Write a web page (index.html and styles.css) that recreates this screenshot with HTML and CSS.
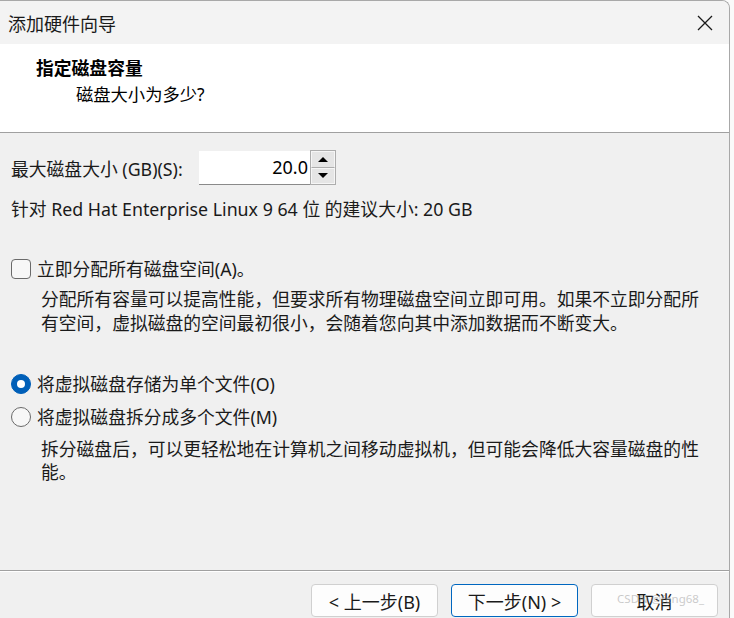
FILE: index.html
```html
<!DOCTYPE html>
<html lang="zh-CN">
<head>
    <meta charset="UTF-8">
    <title>添加硬件向导</title>
    <link rel="stylesheet" href="styles.css">
</head>
<body>
    <div class="window">
        <div class="titlebar">
            <span class="title">添加硬件向导</span>
            <button class="close" aria-label="关闭">
                <svg width="16" height="16" viewBox="0 0 16 16"><path d="M1 1 L15 15 M15 1 L1 15" stroke="#1a1a1a" stroke-width="1.3" fill="none"/></svg>
            </button>
        </div>

        <div class="header">
            <h1>指定磁盘容量</h1>
            <p>磁盘大小为多少?</p>
        </div>

        <div class="content">
            <div class="size-row">
                <label for="size">最大磁盘大小 (GB)(S):</label>
                <div class="spinner">
                    <input type="text" id="size" value="20.0">
                    <div class="spin-btns">
                        <span class="spin up"></span>
                        <span class="spin down"></span>
                    </div>
                </div>
            </div>
            <p class="hint">针对 Red Hat Enterprise Linux 9 64 位 的建议大小: 20 GB</p>

            <label class="option check-option">
                <span class="checkbox"></span>
                立即分配所有磁盘空间(A)。
            </label>
            <p class="desc">分配所有容量可以提高性能，但要求所有物理磁盘空间立即可用。如果不立即分配所有空间，虚拟磁盘的空间最初很小，会随着您向其中添加数据而不断变大。</p>

            <label class="option radio-first">
                <span class="radio checked"></span>
                将虚拟磁盘存储为单个文件(O)
            </label>
            <label class="option radio-second">
                <span class="radio"></span>
                将虚拟磁盘拆分成多个文件(M)
            </label>
            <p class="desc desc-split">拆分磁盘后，可以更轻松地在计算机之间移动虚拟机，但可能会降低大容量磁盘的性能。</p>
        </div>

        <div class="footer">
            <button class="btn">&lt; 上一步(B)</button>
            <button class="btn primary">下一步(N) &gt;</button>
            <button class="btn">取消</button>
            <span class="watermark">CSDN @feng68_</span>
        </div>
    </div>
</body>
</html>
```

FILE: styles.css
```css
body {
    margin: 0;
    background: #fafafa;
    font-family: "Noto Sans", "Noto Sans CJK SC", sans-serif;
    color: #1a1a1a;
}
.window {
    width: 730px;
    height: 640px;
    background: #f0f0f0;
    border-top: 1px solid #a8a8a8;
    border-right: 1px solid #a8a8a8;
    border-top-right-radius: 8px;
    overflow: hidden;
    box-sizing: border-box;
    display: flex;
    flex-direction: column;
}
.titlebar {
    height: 43px;
    background: #f3f3f3;
    display: flex;
    align-items: center;
    justify-content: space-between;
    padding-left: 8px;
    flex-shrink: 0;
}
.title {
    font-size: 18px;
    color: #1a1a1a;
}
.close {
    width: 46px;
    height: 43px;
    border: none;
    background: transparent;
    display: flex;
    align-items: center;
    justify-content: center;
    padding: 0;
    margin-right: 1px;
}
.header {
    height: 88px;
    background: #ffffff;
    border-bottom: 1px solid #a0a0a0;
    flex-shrink: 0;
}
.header h1 {
    margin: 0;
    padding: 11px 0 0 36px;
    font-size: 17.8px;
    line-height: 26px;
    font-weight: bold;
    color: #000;
}
.header p {
    margin: 0;
    padding: 2px 0 0 76px;
    font-size: 17.3px;
    line-height: 24px;
    color: #000;
}
.content {
    height: 437px;
    padding: 0 11px;
    box-sizing: border-box;
    display: flex;
    flex-direction: column;
    flex-shrink: 0;
    font-size: 17.8px;
}
.size-row {
    margin-top: 17px;
    display: flex;
    align-items: center;
    height: 35px;
}
.size-row label {
    width: 188px;
    color: #1a1a1a;
}
.spinner {
    display: flex;
    height: 35px;
}
.spinner input {
    width: 111px;
    height: 34px;
    box-sizing: border-box;
    border: none;
    border-bottom: 1px solid #8a8a8a;
    background: #ffffff;
    text-align: right;
    font-family: "Noto Sans", sans-serif;
    font-size: 18px;
    color: #000;
    padding: 0 2px 2px 0;
    margin-top: 1px;
    outline: none;
}
.spin-btns {
    width: 26px;
    height: 35px;
    box-sizing: border-box;
    border: 1px solid #adadad;
    display: flex;
    flex-direction: column;
    background: #dcdcdc;
}
.spin {
    flex: 1;
    background: #e5e5e5;
    border: 1px solid #f6f6f6;
    display: flex;
    align-items: center;
    justify-content: center;
}
.spin.up {
    border-bottom-color: #adadad;
}
.spin::after {
    content: "";
    width: 0;
    height: 0;
    border-left: 5px solid transparent;
    border-right: 5px solid transparent;
}
.spin.up::after {
    border-bottom: 5px solid #000;
}
.spin.down::after {
    border-top: 5px solid #000;
}
.hint {
    margin: 12px 0 0;
    line-height: 24px;
}
.option {
    display: flex;
    align-items: center;
    gap: 6px;
    line-height: 24px;
    height: 24px;
}
.check-option {
    margin-top: 36px;
}
.checkbox {
    width: 18px;
    height: 18px;
    border: 1px solid #6a6a6a;
    border-radius: 4px;
    background: #f7f7f7;
    flex-shrink: 0;
}
.desc {
    margin: 6px 0 0 30px;
    width: 665px;
    font-size: 17.8px;
    line-height: 24px;
    color: #1a1a1a;
}
.radio-first {
    margin-top: 37px;
}
.radio-second {
    margin-top: 9px;
}
.radio {
    width: 18px;
    height: 18px;
    border: 1px solid #6a6a6a;
    border-radius: 50%;
    background: #f7f7f7;
    flex-shrink: 0;
    display: flex;
    align-items: center;
    justify-content: center;
}
.radio.checked {
    background: #005fb8;
    border-color: #005fb8;
}
.radio.checked::after {
    content: "";
    width: 8px;
    height: 8px;
    border-radius: 50%;
    background: #ffffff;
}
.desc-split {
    margin-top: 9px;
    line-height: 23px;
}
.footer {
    position: relative;
    border-top: 1px solid #a0a0a0;
    box-shadow: inset 0 1px 0 #ffffff;
    display: flex;
    justify-content: flex-end;
    gap: 13px;
    padding: 13px 11px 0 0;
}
.btn {
    width: 127px;
    height: 33px;
    border: 1px solid #d0d0d0;
    border-radius: 4px;
    background: #fdfdfd;
    font-family: "Noto Sans", "Noto Sans CJK SC", sans-serif;
    font-size: 18px;
    color: #1a1a1a;
    padding: 0;
}
.btn.primary {
    border-color: #0067c0;
}
.watermark {
    position: absolute;
    right: 25px;
    top: 20px;
    font-family: "Noto Sans", sans-serif;
    font-size: 11.5px;
    color: rgba(150, 150, 150, 0.5);
    pointer-events: none;
}
```
